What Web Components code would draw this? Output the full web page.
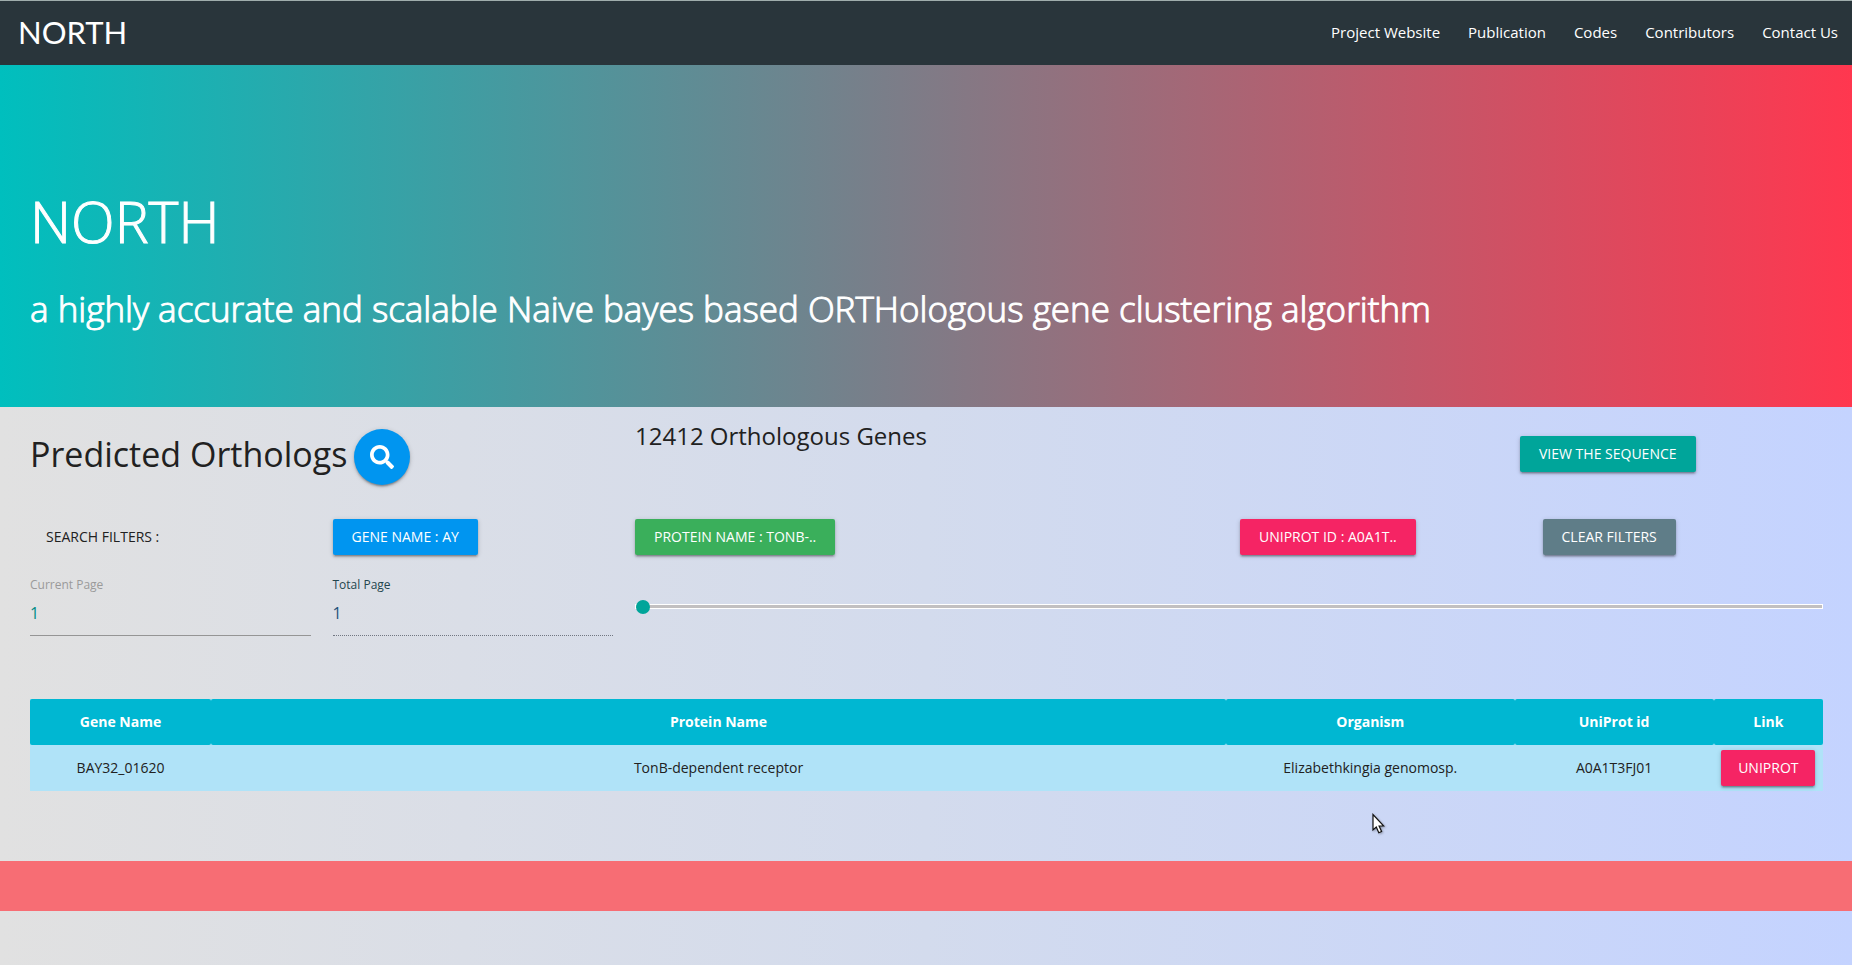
<!DOCTYPE html>
<html lang="en">
<head>
<meta charset="utf-8">
<meta name="viewport" content="width=device-width, initial-scale=1">
<title>NORTH</title>
<style>
  body {
    margin: 0;
    min-height: 100vh;
    font: 14px/20px "Open Sans", "Noto Sans", sans-serif;
    color: #212121;
    background: linear-gradient(90deg, #e1e1e1, #d3dbed 50%, #c4d3ff);
  }
</style>
</head>
<body>
<north-app></north-app>

<script>
const define = (name, html, setup) => {
  const template = document.createElement('template');
  template.innerHTML = html;
  customElements.define(name, class extends HTMLElement {
    constructor() {
      super();
      this.attachShadow({ mode: 'open' }).append(template.content.cloneNode(true));
    }
    connectedCallback() {
      if (setup) setup(this, this.shadowRoot);
    }
  });
};

define('north-link', `
  <style>
    :host { display: block; }
    a { display: block; padding: 0 14px; color: #fff; font-size: 15px; line-height: 62px; text-decoration: none; white-space: nowrap; }
  </style>
  <a href="#"><slot></slot></a>`,
  (host, root) => { root.querySelector('a').href = host.getAttribute('to') || '#'; });

define('north-nav', `
  <style>
    :host { display: block; background: #29353b; border-top: 1px solid #9fadac; }
    nav { display: flex; justify-content: space-between; align-items: center; height: 62px; padding: 0 0 2px 18px; }
    .brand { color: #fff; font: 31px/62px Lato, sans-serif; text-decoration: none; }
    .links { display: flex; }
  </style>
  <nav>
    <a class="brand" href="#">NORTH</a>
    <div class="links"><slot></slot></div>
  </nav>`);

define('north-hero', `
  <style>
    :host { display: block; padding: 112px 30px 72px; color: #fff; background: linear-gradient(90deg, #00bfbe, #ff374f); }
    h1, p { margin: 0; font-weight: 300; -webkit-text-stroke: 1px currentColor; }
    h1 { font-size: 57px; line-height: 88px; }
    p { font-size: 35px; line-height: 48px; padding: 20px 0 2px; }
  </style>
  <h1><slot name="title"></slot></h1>
  <p><slot></slot></p>`);

define('north-button', `
  <style>
    :host { display: inline-block; }
    button {
      display: block; height: 36px; padding: 0 var(--pad, 19px); border: 0; border-radius: 2px;
      background: var(--fill, #00a59a); color: #fff;
      font: inherit; line-height: 36px; text-transform: uppercase; white-space: nowrap; cursor: pointer;
      box-shadow: 0 2px 2px rgba(0,0,0,.2), 0 3px 1px -2px rgba(0,0,0,.14), 0 1px 5px rgba(0,0,0,.16);
    }
  </style>
  <button type="button"><slot></slot></button>`);

define('north-search-button', `
  <style>
    :host { display: block; }
    button {
      display: grid; place-items: center; width: 56px; height: 56px; padding: 0; border: 0; border-radius: 50%;
      background: #0095f0; cursor: pointer;
      box-shadow: 0 2px 2px rgba(0,0,0,.2), 0 3px 1px -2px rgba(0,0,0,.14), 0 1px 5px rgba(0,0,0,.16);
    }
    svg { display: block; width: 24px; height: 24px; fill: #fff; }
  </style>
  <button type="button" aria-label="Search">
    <svg viewBox="0 0 512 512"><path d="M505 442.700 405.300 343c-4.500-4.500-10.600-7-17-7H372c27.600-35.300 44-79.700 44-128C416 93.100 322.900 0 208 0S0 93.100 0 208s93.100 208 208 208c48.300 0 92.700-16.400 128-44v16.300c0 6.400 2.500 12.500 7 17l99.700 99.700c9.400 9.400 24.600 9.400 33.900 0l28.300-28.300c9.400-9.400 9.400-24.600.1-34zM208 336c-70.700 0-128-57.200-128-128 0-70.700 57.200-128 128-128 70.700 0 128 57.200 128 128 0 70.700-57.200 128-128 128z"/></svg>
  </button>`);

define('north-field', `
  <style>
    :host { display: block; }
    label { display: block; font-size: 12px; line-height: 16px; color: #9a9a9a; }
    input {
      box-sizing: border-box; display: block; width: 100%; height: 43px; margin: 0; padding: 0 0 3px;
      border: 0; border-bottom: 1px solid #959595; border-radius: 0; background: none;
      font: inherit; font-size: 16px; color: #008c86; outline: 0;
    }
    :host([readonly]) label { color: #24464e; }
    :host([readonly]) input { color: #23507a; border-bottom: 1px dotted #727782; }
  </style>
  <label for="value"></label>
  <input id="value" type="text">`,
  (host, root) => {
    root.querySelector('label').textContent = host.getAttribute('label');
    const input = root.querySelector('input');
    input.value = host.getAttribute('value');
    input.readOnly = host.hasAttribute('readonly');
  });

define('north-range', `
  <style>
    :host { display: block; }
    input { -webkit-appearance: none; appearance: none; display: block; width: 100%; height: 14px; margin: 0; background: none; outline: 0; }
    input::-webkit-slider-runnable-track { box-sizing: border-box; height: 5px; background: #c2c0c1; border: 1px solid #fff; }
    input::-webkit-slider-thumb { -webkit-appearance: none; width: 14px; height: 14px; margin-top: -5px; border: 0; border-radius: 50%; background: #00a59a; }
    input::-moz-range-track { height: 3px; background: #c2c0c1; border: 1px solid #fff; }
    input::-moz-range-thumb { width: 14px; height: 14px; border: 0; border-radius: 50%; background: #00a59a; }
  </style>
  <input type="range" min="1" max="100" value="1" aria-label="Page">`);

define('north-results', `
  <style>
    :host { display: block; }
    table { width: 100%; table-layout: fixed; border-collapse: collapse; background: #b0e3f8; }
    th, td { height: 46px; padding: 0; text-align: center; overflow: hidden; white-space: nowrap; }
    th { background: #00b7d2; border-radius: 2px; color: #fff; font-weight: 700; }
    td:last-child { overflow: visible; }
    north-button { --fill: #f52464; --pad: 17px; vertical-align: middle; }
    .gene { width: 10.1%; }
    .organism { width: 16.1%; }
    .id { width: 11.1%; }
    .link { width: 6.1%; }
  </style>
  <table>
    <thead><tr>
      <th class="gene" scope="col">Gene Name</th>
      <th scope="col">Protein Name</th>
      <th class="organism" scope="col">Organism</th>
      <th class="id" scope="col">UniProt id</th>
      <th class="link" scope="col">Link</th>
    </tr></thead>
    <tbody><tr>
      <td>BAY32_01620</td>
      <td>TonB-dependent receptor</td>
      <td>Elizabethkingia genomosp.</td>
      <td>A0A1T3FJ01</td>
      <td><north-button>Uniprot</north-button></td>
    </tr></tbody>
  </table>`);

define('north-pointer', `
  <style>
    :host { position: absolute; left: 74.100%; bottom: 27px; pointer-events: none; }
    svg { display: block; width: 13px; height: 21px; filter: drop-shadow(1px 1px 1px rgba(0,0,0,.3)); }
  </style>
  <svg viewBox="0 0 13 21"><path d="M1 1.500V17l3.300-3 2.500 5.700 2.800-1.200L7.100 13h4.700z" fill="#fff" stroke="#111" stroke-width="1.200"/></svg>`);

define('north-app', `
  <style>
    :host { display: block; }
    main { position: relative; padding: 15px 29px 70px 30px; }
    .head { display: grid; grid-template-columns: calc((100% - 44px) / 3) 1fr 303px; column-gap: 22px; align-items: end; }
    .title { display: flex; align-items: center; gap: 7px; padding-top: 7px; }
    h2, h3 { margin: 0; font-weight: 400; }
    h2 { font-size: 34px; line-height: 48px; white-space: nowrap; padding-bottom: 6px; }
    h3 { align-self: start; font-size: 24px; line-height: 28px; }
    .head north-button { justify-self: start; margin-bottom: 13px; }
    .filters, .paging { display: grid; grid-template-columns: repeat(6, minmax(0, 1fr)); column-gap: 22px; align-items: center; }
    .filters { margin-top: 34px; }
    .filters > * { justify-self: start; }
    .caption { padding-left: 16px; }
    .protein, north-range { grid-column-start: 3; }
    .uniprot { grid-column-start: 5; }
    .paging { margin-top: 22px; }
    north-range { grid-column-end: 7; }
    north-results { margin-top: 63px; }
    footer { height: 50px; background: #f76d74; }
  </style>
  <north-nav>
    <north-link>Project Website</north-link>
    <north-link>Publication</north-link>
    <north-link>Codes</north-link>
    <north-link>Contributors</north-link>
    <north-link>Contact Us</north-link>
  </north-nav>
  <north-hero>
    <span slot="title">NORTH</span>
    a highly accurate and scalable Naive bayes based ORTHologous gene clustering algorithm
  </north-hero>
  <main>
    <section class="head">
      <div class="title"><h2>Predicted Orthologs</h2><north-search-button></north-search-button></div>
      <h3>12412 Orthologous Genes</h3>
      <north-button style="--fill:#00a59a">View the sequence</north-button>
    </section>
    <section class="filters">
      <span class="caption">SEARCH FILTERS :</span>
      <north-button style="--fill:#0095f0">Gene Name : AY</north-button>
      <north-button class="protein" style="--fill:#3aaf5b">Protein Name : TonB-..</north-button>
      <north-button class="uniprot" style="--fill:#f52464">Uniprot ID : A0A1T..</north-button>
      <north-button style="--fill:#5f7d88">Clear filters</north-button>
    </section>
    <section class="paging">
      <north-field label="Current Page" value="1"></north-field>
      <north-field label="Total Page" value="1" readonly></north-field>
      <north-range></north-range>
    </section>
    <north-results></north-results>
    <north-pointer></north-pointer>
  </main>
  <footer></footer>`);
</script>
</body>
</html>
